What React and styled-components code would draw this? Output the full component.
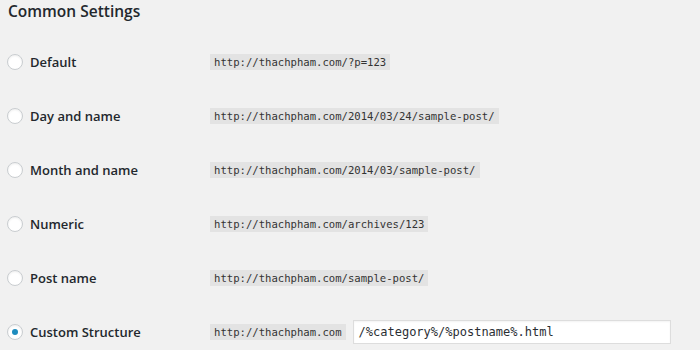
import React from 'react';
import styled, { createGlobalStyle } from 'styled-components';

const GlobalStyle = createGlobalStyle`
  html, body {
    margin: 0;
    padding: 0;
    background: #f1f1f1;
  }
  body {
    font-family: "Open Sans", "Liberation Sans", sans-serif;
    color: #23282d;
  }
`;

const options = [
  { id: 'default', label: 'Default', url: 'http://thachpham.com/?p=123' },
  { id: 'day', label: 'Day and name', url: 'http://thachpham.com/2014/03/24/sample-post/' },
  { id: 'month', label: 'Month and name', url: 'http://thachpham.com/2014/03/sample-post/' },
  { id: 'numeric', label: 'Numeric', url: 'http://thachpham.com/archives/123' },
  { id: 'post', label: 'Post name', url: 'http://thachpham.com/sample-post/' },
];

const Wrapper = styled.section`
  width: 700px;
  height: 350px;
  overflow: hidden;
  padding: 0 0 0 7px;
  box-sizing: border-box;
`;

const Title = styled.h2`
  margin: 0;
  padding: 0 0 0 1px;
  height: 35px;
  font-size: 15.5px;
  font-weight: 600;
  line-height: 23px;
  color: #23282d;
`;

const Row = styled.div`
  display: grid;
  grid-template-columns: 203px 1fr;
  align-items: center;
  height: 54px;
`;

const Label = styled.label`
  display: flex;
  align-items: center;
  gap: 7px;
  font-size: 13px;
  font-weight: 600;
  color: #23282d;
`;

const Radio = styled.span`
  width: 16px;
  height: 16px;
  box-sizing: border-box;
  border-radius: 50%;
  border: 1px solid #c9cdd0;
  background: #fff;
  box-shadow: inset 0 1px 2px rgba(0, 0, 0, 0.07);
  display: grid;
  place-items: center;
  &::after {
    content: '';
    width: ${(p) => (p.$checked ? '6px' : '0')};
    height: ${(p) => (p.$checked ? '6px' : '0')};
    border-radius: 50%;
    background: #1e8cbe;
  }
`;

const Field = styled.div`
  display: flex;
  align-items: center;
  gap: 7px;
`;

const Code = styled.code`
  font-family: "DejaVu Sans Mono", "Liberation Mono", monospace;
  font-size: 10.6px;
  line-height: 16px;
  padding: 0 4px;
  background: #e3e3e3;
  color: #333;
`;

const Input = styled.div`
  width: 318px;
  height: 24px;
  box-sizing: border-box;
  background: #fff;
  border: 1px solid #dddddd;
  box-shadow: inset 0 1px 2px rgba(0, 0, 0, 0.05);
  padding: 0 5px;
  display: flex;
  align-items: center;
  font-family: "DejaVu Sans Mono", "Liberation Mono", monospace;
  font-size: 12px;
  color: #2a2e33;
`;

const App = () => {
  return (
    <>
      <GlobalStyle />
      <Wrapper>
        <Title>Common Settings</Title>
        {options.map(({ id, label, url }) => (
          <Row key={id}>
            <Label>
              <Radio />
              {label}
            </Label>
            <Field>
              <Code>{url}</Code>
            </Field>
          </Row>
        ))}
        <Row>
          <Label>
            <Radio $checked />
            Custom Structure
          </Label>
          <Field>
            <Code>http://thachpham.com</Code>
            <Input>/%category%/%postname%.html</Input>
          </Field>
        </Row>
      </Wrapper>
    </>
  );
};

export default App;
